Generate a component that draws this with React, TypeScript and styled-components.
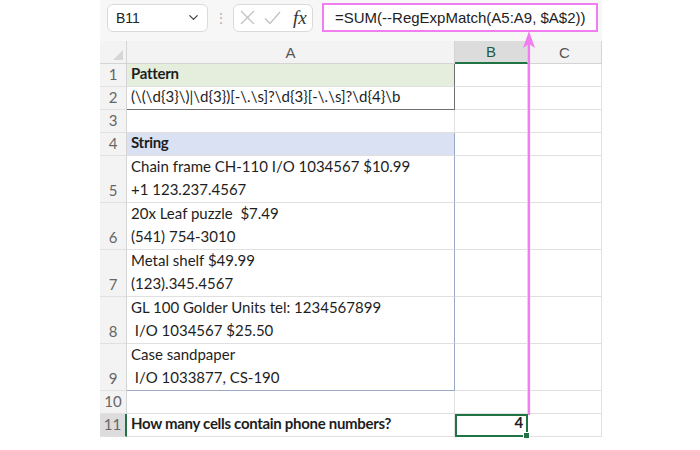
import React from 'react';
import styled, { createGlobalStyle, css } from 'styled-components';
import { ChevronDown } from 'lucide-react';

/* ── Global ──────────────────────────────────────────────────────── */

const GlobalStyle = createGlobalStyle`
  html, body {
    margin: 0;
    background: #fff;
  }
  body {
    font-family: 'Liberation Sans', Arial, sans-serif;
  }
`;

const GREEN = '#217346';
const PINK = '#f07ef0';
const GRID = '#e0e0e0';
const HEAD_BG = '#f3f3f3';
const HEAD_SEL = '#dcdcdc';

/* ── Formula bar ─────────────────────────────────────────────────── */

const Page = styled.div`
  position: relative;
  width: 700px;
  height: 450px;
  padding-left: 100px;
  box-sizing: border-box;
`;

const Toolbar = styled.div`
  display: flex;
  align-items: center;
  width: 502px;
  height: 41px;
  box-sizing: border-box;
  padding: 0 4px 6px 7px;
  background: #f7f7f7;
`;

const NameBox = styled.div`
  display: flex;
  align-items: center;
  justify-content: space-between;
  width: 101px;
  height: 28px;
  box-sizing: border-box;
  padding: 0 6px 0 8px;
  background: #fff;
  border: 1px solid #dadada;
  border-radius: 6px;
  font-size: 14px;
  color: #222;
`;

const Dots = styled.div`
  width: 25px;
  text-align: center;
  color: #b5b5b5;
  font-size: 14px;
  line-height: 1;
`;

const FxBox = styled.div`
  display: flex;
  align-items: center;
  gap: 9px;
  width: 80px;
  height: 28px;
  box-sizing: border-box;
  padding: 0 4px 0 6px;
  background: #fff;
  border: 1px solid #dadada;
  border-radius: 6px;

  svg {
    flex-shrink: 0;
  }
`;

const FxLabel = styled.span`
  font-family: 'Liberation Serif', 'Times New Roman', serif;
  font-style: italic;
  font-size: 19px;
  color: #333;
  margin-left: 3px;
`;

const FormulaBox = styled.div`
  display: flex;
  align-items: center;
  margin-left: 9px;
  width: 276px;
  height: 29px;
  box-sizing: border-box;
  padding-left: 11px;
  background: #fff;
  border: 2px solid ${PINK};
  font-size: 15px;
  color: #222;
  white-space: nowrap;
`;

/* ── Sheet grid ──────────────────────────────────────────────────── */

const Sheet = styled.div`
  display: grid;
  grid-template-columns: 27px 328px 73px 74px;
  grid-template-rows: repeat(5, 23px) repeat(5, 47px) 23px 23px;
  width: 502px;
`;

const ColHead = styled.div<{ $selected?: boolean }>`
  display: flex;
  align-items: center;
  justify-content: center;
  box-sizing: border-box;
  background: ${(p) => (p.$selected ? HEAD_SEL : HEAD_BG)};
  border-right: 1px solid #d4d4d4;
  border-bottom: ${(p) => (p.$selected ? `2px solid ${GREEN}` : '1px solid #d4d4d4')};
  color: ${(p) => (p.$selected ? '#1f5c3c' : '#555')};
  font-size: 15px;
`;

const Corner = styled.div`
  position: relative;
  background: ${HEAD_BG};
  border-right: 1px solid #d4d4d4;
  border-bottom: 1px solid #d4d4d4;

  &::after {
    content: '';
    position: absolute;
    right: 3px;
    bottom: 3px;
    border-left: 10px solid transparent;
    border-bottom: 10px solid #d6d6d6;
  }
`;

const RowHead = styled.div<{ $selected?: boolean }>`
  display: flex;
  align-items: flex-end;
  justify-content: center;
  padding-bottom: 2px;
  box-sizing: border-box;
  background: ${(p) => (p.$selected ? HEAD_SEL : HEAD_BG)};
  border-right: ${(p) => (p.$selected ? `2px solid ${GREEN}` : '1px solid #d4d4d4')};
  border-bottom: 1px solid ${GRID};
  color: #666;
  font-family: 'Lato', 'Liberation Sans', sans-serif;
  font-size: 15px;
  line-height: 20px;
`;

const Cell = styled.div<{
  $bg?: string;
  $bold?: boolean;
  $right?: string;
  $bottom?: string;
  $alignRight?: boolean;
}>`
  display: flex;
  flex-direction: column;
  justify-content: flex-end;
  align-items: ${(p) => (p.$alignRight ? 'flex-end' : 'flex-start')};
  box-sizing: border-box;
  padding: 0 4px 1px 4px;
  background: ${(p) => p.$bg || '#fff'};
  border-right: 1px solid ${(p) => p.$right || GRID};
  border-bottom: 1px solid ${(p) => p.$bottom || GRID};
  font-family: 'Lato', 'Liberation Sans', sans-serif;
  font-size: 15px;
  line-height: 23px;
  font-weight: ${(p) => (p.$bold ? 700 : 400)};
  letter-spacing: ${(p) => (p.$bold ? '-0.3px' : '0')};
  color: #1e1e1e;
  white-space: pre;
  overflow: visible;
`;

const ActiveCell = styled(Cell)`
  position: relative;
  border: 2px solid ${GREEN};
  padding-right: 3px;
  ${css`
    &::after {
      content: '';
      position: absolute;
      right: -4px;
      bottom: -4px;
      width: 5px;
      height: 5px;
      background: ${GREEN};
      border: 1px solid #fff;
    }
  `}
`;

const Arrow = styled.svg`
  position: absolute;
  left: 522px;
  top: 31px;
`;

/* ── Data ────────────────────────────────────────────────────────── */

const PATTERN_BORDER = '#6f6f6f';
const STRING_BORDER = '#9aa9c4';

type Row = {
  n: number;
  a: string[];
  bg?: string;
  bold?: boolean;
  right?: string;
  bottom?: string;
};

const rows: Row[] = [
  { n: 1, a: ['Pattern'], bg: '#e5eedc', bold: true, right: PATTERN_BORDER },
  {
    n: 2,
    a: ['(\\(\\d{3}\\)|\\d{3})[-\\.\\s]?\\d{3}[-\\.\\s]?\\d{4}\\b'],
    right: PATTERN_BORDER,
    bottom: PATTERN_BORDER,
  },
  { n: 3, a: [''] },
  { n: 4, a: ['String'], bg: '#d9e1f2', bold: true, right: STRING_BORDER },
  { n: 5, a: ['Chain frame CH-110 I/O 1034567 $10.99', '+1 123.237.4567'], right: STRING_BORDER },
  { n: 6, a: ['20x Leaf puzzle  $7.49', '(541) 754-3010'], right: STRING_BORDER },
  { n: 7, a: ['Metal shelf $49.99', '(123).345.4567'], right: STRING_BORDER },
  { n: 8, a: ['GL 100 Golder Units tel: 1234567899', ' I/O 1034567 $25.50'], right: STRING_BORDER },
  {
    n: 9,
    a: ['Case sandpaper', ' I/O 1033877, CS-190'],
    right: STRING_BORDER,
    bottom: STRING_BORDER,
  },
  { n: 10, a: [''] },
];

/* ── Component ───────────────────────────────────────────────────── */

const App: React.FC = () => (
  <Page>
    <GlobalStyle />

    <Toolbar>
      <NameBox>
        B11
        <ChevronDown size={15} color="#444" strokeWidth={2} />
      </NameBox>
      <Dots>⋮</Dots>
      <FxBox>
        <svg width="15" height="15" viewBox="0 0 15 15">
          <path d="M1 1 L14 14 M14 1 L1 14" stroke="#c2c2c2" strokeWidth="1.3" fill="none" />
        </svg>
        <svg width="17" height="14" viewBox="0 0 17 14">
          <path d="M1 7.5 L6 12.5 L16 1" stroke="#c2c2c2" strokeWidth="1.3" fill="none" />
        </svg>
        <FxLabel>fx</FxLabel>
      </FxBox>
      <FormulaBox>=SUM(--RegExpMatch(A5:A9, $A$2))</FormulaBox>
    </Toolbar>

    <Sheet>
      <Corner />
      <ColHead>A</ColHead>
      <ColHead $selected>B</ColHead>
      <ColHead>C</ColHead>

      {rows.map((r) => (
        <React.Fragment key={r.n}>
          <RowHead>{r.n}</RowHead>
          <Cell $bg={r.bg} $bold={r.bold} $right={r.right} $bottom={r.bottom}>
            {r.a.map((line, i) => (
              <span key={i}>{line}</span>
            ))}
          </Cell>
          <Cell />
          <Cell />
        </React.Fragment>
      ))}

      <RowHead $selected>11</RowHead>
      <Cell $bold>How many cells contain phone numbers?</Cell>
      <ActiveCell $bold $alignRight>4</ActiveCell>
      <Cell />
    </Sheet>

    <Arrow width="14" height="384" viewBox="0 0 14 384">
      <line x1="7" y1="10" x2="7" y2="384" stroke={PINK} strokeWidth="2.2" />
      <polygon points="7,0 13,17 7,13 1,17" fill={PINK} />
    </Arrow>
  </Page>
);

export default App;
